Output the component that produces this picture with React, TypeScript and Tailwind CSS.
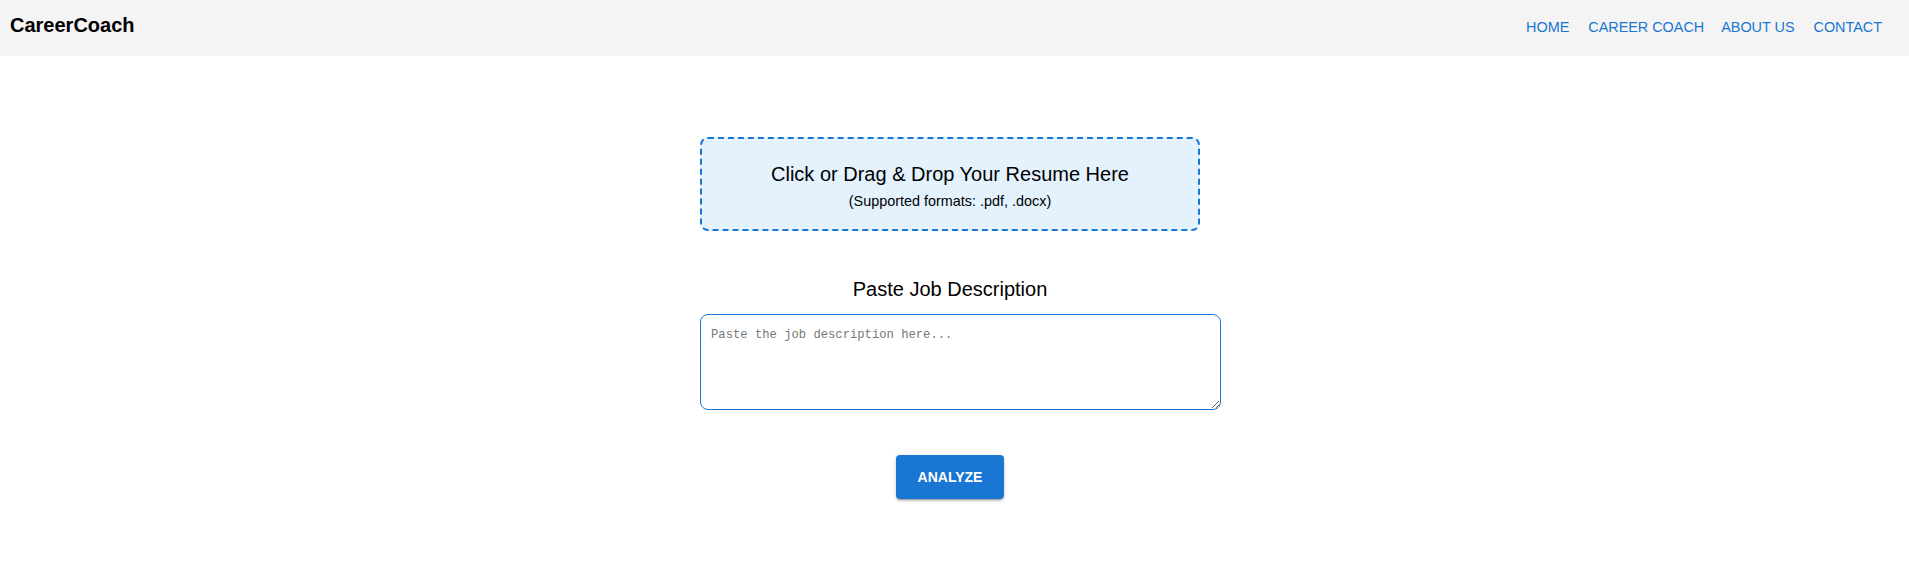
import React from 'react';

const App: React.FC = () => {
  const links = [
    { label: "HOME", cls: "mr-[19px]" },
    { label: "CAREER COACH", cls: "mr-[17px]" },
    { label: "ABOUT US", cls: "mr-[19px]" },
    { label: "CONTACT", cls: "" },
  ];

  return (
    <div className="min-h-screen bg-white font-['Liberation_Sans',Arial,sans-serif] text-black">
      <header className="h-14 bg-[#f4f4f4] flex items-center justify-between pl-[10px] pr-[27px]">
        <h1 className="text-[20px] font-bold leading-none -mt-[6px]">CareerCoach</h1>
        <nav className="flex items-center -mt-[1px]">
          {links.map((l) => (
            <a key={l.label} href="#" className={`text-[14.4px] text-[#1976d2] leading-none ${l.cls}`}>
              {l.label}
            </a>
          ))}
        </nav>
      </header>

      <main className="flex justify-center pt-[81px] pr-[9px]">
        <div className="w-[500px] flex flex-col">
          <div className="w-full border-2 border-dashed border-[#1976d2] rounded-lg bg-[#e3f2fd] pt-[24px] pb-[20px] text-center cursor-pointer">
            <p className="text-[20px] leading-[23px] mb-[7px]">Click or Drag &amp; Drop Your Resume Here</p>
            <p className="text-[14.4px] leading-[16px]">(Supported formats: .pdf, .docx)</p>
          </div>

          <h2 className="mt-[47px] text-[20px] leading-[23px] text-center">Paste Job Description</h2>

          <textarea
            placeholder="Paste the job description here..."
            className="mt-[13px] w-[521px] h-[96px] border border-[#1976d2] rounded-lg px-[10px] pt-[11px] pb-[9px] text-[12.2px] font-['Liberation_Mono',monospace] placeholder:text-[#777] outline-none"
          />

          <button className="self-center mt-[45px] w-[108px] h-[44px] rounded bg-[#1976d2] text-white text-[14px] font-bold shadow-[0_3px_1px_-2px_rgba(0,0,0,0.2),0_2px_2px_0_rgba(0,0,0,0.14),0_1px_5px_0_rgba(0,0,0,0.12)]">
            ANALYZE
          </button>
        </div>
      </main>
    </div>
  );
};

export default App;
